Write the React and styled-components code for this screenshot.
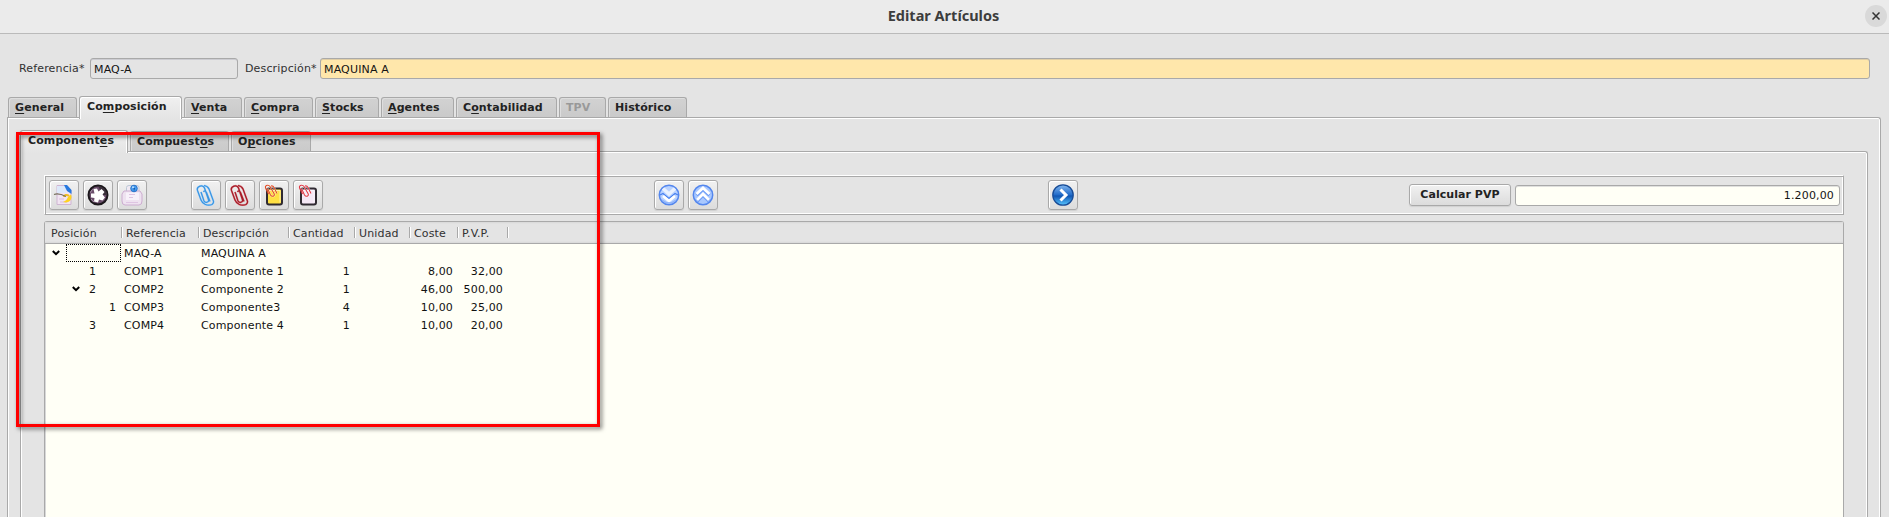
import React from 'react';
import styled, { createGlobalStyle, css } from 'styled-components';

const EDGE = '#a9a9a9';

const GlobalStyle = createGlobalStyle`
  * { box-sizing: border-box; }
  body { margin: 0; overflow: hidden; }
`;

const Window = styled.div`
  position: relative;
  display: flex;
  flex-direction: column;
  height: 517px;
  overflow: hidden;
  background: #e4e4e4;
  color: #141414;
  font: 11px/18px "DejaVu Sans", sans-serif;
  letter-spacing: 0.15px;
  white-space: pre;
`;

const TitleBar = styled.header`
  display: grid;
  grid-template-columns: 1fr auto 1fr;
  align-items: center;
  flex: none;
  height: 34px;
  padding: 0 2px 2px;
  background: #ebebeb;
  border-bottom: 1px solid #bababa;
`;

const Title = styled.h1`
  grid-column: 2;
  margin: 0;
  padding: 0 2px 2px 0;
  color: #3d3d3d;
  font: bold 14.5px/20px "Noto Sans", sans-serif;
  letter-spacing: 0;
`;

const CloseButton = styled.button`
  justify-self: end;
  display: grid;
  place-items: center;
  width: 22px;
  height: 22px;
  padding: 0;
  border: 0;
  border-radius: 50%;
  background: #d9d9d9;
`;

const FieldRow = styled.div`
  display: flex;
  align-items: center;
  flex: none;
  height: 21px;
  margin: 24px 19px 0 19px;
`;

const Label = styled.label`
  flex: none;
  width: ${(p) => p.$width}px;
  margin-left: ${(p) => p.$before || 0}px;
  color: #313131;
`;

const Field = styled.div`
  width: ${(p) => p.$width || 'auto'};
  flex: ${(p) => (p.$width ? 'none' : 1)};
  height: 21px;
  padding: ${(p) => (p.$right ? '1px 5px 0 3px' : '2px 3px 0')};
  border: 1px solid ${EDGE};
  border-radius: 3px;
  box-shadow: inset 0 1px 0 rgba(130, 130, 150, 0.25);
  background: ${(p) => p.$bg};
  text-align: ${(p) => (p.$right ? 'right' : 'left')};
`;

const TabStrip = styled.div`
  position: relative;
  z-index: 1;
  display: flex;
  align-items: flex-end;
  gap: 2px;
  flex: none;
  height: 23px;
  margin: ${(p) => p.$margin};
`;

const Tab = styled.div`
  width: ${(p) => p.$width}px;
  height: 20px;
  margin-bottom: 1px;
  padding: 1px 0 0 6px;
  border: 1px solid ${EDGE};
  border-bottom-width: 0;
  border-radius: 3px 3px 0 0;
  background: linear-gradient(#d2d2d2, #cacaca);
  box-shadow: inset 1px 1px 0 #dedede;
  color: ${(p) => (p.$disabled ? '#999' : '#222')};
  font-weight: bold;
  letter-spacing: 0.1px;
  line-height: 17px;
  u { text-underline-offset: 2px; }
  ${(p) => p.$active && css`
    height: 23px;
    margin-bottom: -1px;
    padding-left: 7px;
    background: linear-gradient(#f0f0f0, #e4e4e4);
    box-shadow: inset 1px 1px 0 #fff, inset -1px 0 0 #fff;
    line-height: 18px;
  `}
`;

const TabPanel = styled.div`
  display: flex;
  flex-direction: column;
  flex: 1;
  min-height: 0;
  margin: ${(p) => p.$margin};
  border: 1px solid ${EDGE};
  border-bottom: 0;
  border-radius: 0 3px 0 0;
  box-shadow: inset 1px 1px 0 #fff, inset -1px 0 0 #fff;
`;

const ToolBar = styled.div`
  display: flex;
  align-items: center;
  flex: none;
  height: 40px;
  margin: 23px 23px 0 23px;
  padding: 0 3px 0 4px;
  border: 1px solid;
  border-color: #fff ${EDGE} ${EDGE} #fff;
  box-shadow: inset 1px 1px 0 ${EDGE}, inset -1px -1px 0 #fff;
`;

const ButtonGroup = styled.div`
  display: flex;
  gap: 4px;
  margin-right: ${(p) => p.$after}px;
`;

const ToolButton = styled.button`
  display: grid;
  place-items: center;
  width: ${(p) => p.$width || 30}px;
  height: ${(p) => p.$height || 30}px;
  padding: 0;
  border: 1px solid ${EDGE};
  border-radius: 3px;
  background: linear-gradient(#f1f1f1, #dcdcdc);
  box-shadow: inset 1px 1px 0 #fff, 0 1px 1px #d0d0d0;
  color: #222;
  font: bold 11px/18px "DejaVu Sans", sans-serif;
  letter-spacing: 0.05px;
  svg { display: block; }
`;

const Tree = styled.div`
  flex: 1;
  min-height: 0;
  margin: 6px 23px 0 23px;
  border: 1px solid ${EDGE};
  border-bottom: 0;
  border-radius: 3px 3px 0 0;
  background: #fffff6;
  box-shadow: inset 1px 0 0 #d8d8d8;
`;

const columns = '77px 77px 90px 66px 55px 48px 50px';

const TreeHeader = styled.div`
  display: grid;
  grid-template-columns: ${columns};
  align-items: center;
  height: 22px;
  border-bottom: 1px solid ${EDGE};
  background: linear-gradient(#d8d8d8, #e4e4e4 2px, #e4e4e4 19px, #d8d8d8);
  color: #313131;
`;

const HeaderCell = styled.div`
  height: 11px;
  padding-left: ${(p) => (p.$first ? 6 : 4)}px;
  border-right: 1px solid ${EDGE};
  box-shadow: 1px 0 0 #fff;
  line-height: 13px;
`;

const Row = styled.div`
  display: grid;
  grid-template-columns: ${columns};
  height: 18px;
  color: #111;
  line-height: 20px;
`;

const Cell = styled.div`
  padding: ${(p) => (p.$number ? '0 5px 0 0' : '0 0 0 2px')};
  text-align: ${(p) => (p.$number ? 'right' : 'left')};
`;

const PriceCell = styled(Cell)`
  margin-left: -4px;
`;

const TreeCell = styled.div`
  display: flex;
  align-items: flex-start;
  height: 18px;
  padding-left: ${(p) => p.$depth * 20}px;
`;

const Expander = styled.span`
  display: grid;
  place-items: center;
  flex: none;
  width: 21px;
  height: 18px;
`;

const Position = styled.span`
  height: 18px;
  padding-left: 3px;
  ${(p) => p.$focused && css`
    flex: 1;
    margin-right: 1px;
    border: 1px dotted #000;
  `}
`;

const Highlight = styled.div`
  position: absolute;
  z-index: 2;
  left: 16px;
  top: 132px;
  width: 584px;
  height: 295px;
  border: 3px solid #f00;
  filter: drop-shadow(2px 2px 2px rgba(0, 0, 0, 0.55));
`;

const Icon = ({ children, size = 22 }) => (
  <svg width={size} height={size} viewBox="0 0 22 22" fill="none">{children}</svg>
);

const EditIcon = () => (
  <Icon>
    <path d="M4 1.5h10l4 5v14H4z" fill="#f1e4f2" stroke="#cfb5d2" />
    <path d="M4 2h9v7H4z" fill="#dce8fa" />
    <path d="M11 1h3l4.5 5v4L14 7z" fill="#2879df" />
    <path d="M7 18h7M6 15h5" stroke="#dabddd" />
    <path d="M18 10.5c2 5-2 9.5-8 7.5 3-1 4-3 5-5z" fill="#ffd321" />
    <path d="M11 13c0-2 3-3 5-1" stroke="#f3bf22" strokeWidth="2" />
    <path d="M1 10.5c4-1.5 8 0 12 2" stroke="#77705e" strokeWidth="1.2" />
  </Icon>
);

const WheelIcon = () => (
  <Icon>
    <circle cx="11" cy="11" r="9.5" fill="#6b4e6b" stroke="#1c181c" strokeWidth="2" />
    <path d="M11 2a9 9 0 0 1 9 9h-4z" fill="#3b303b" />
    <path d="m6.500 5 3.500-.5 1.500 3L14.500 5l3 3-2 2.500 2.500 3-2.500 3-3.500-1-1 3-4-1 .5-3.500-3.500-.5 0-4 3.500 0z" fill="#fff" />
    <path d="M3.5 8.5a8 8 0 0 1 2-3M4 15a8 8 0 0 0 3 3" stroke="#b29bb4" />
  </Icon>
);

const ScaleIcon = () => (
  <Icon>
    <path d="M5.5 7V3.5Q5.5 1.5 8 1.5h8q2 0 2 2V7" fill="#f1eaf3" stroke="#bcc8d6" />
    <path d="M3 7h16l2 3v7q0 4-3 4H4q-3 0-3-4v-7z" fill="#eee2f0" stroke="#ccacd0" />
    <path d="M5 8.5h13V16H5z" fill="#f8f1fa" />
    <path d="M5 18.5h12M8 10.5h6M8 13.5h4" stroke="#dec4e2" />
    <circle cx="13" cy="4.5" r="3.3" fill="#459cf0" stroke="#2b75ca" />
    <path d="m12.5 4 .5 3.5 1-3.5" fill="#124d9c" />
    <circle cx="12" cy="3.3" r="1" fill="#bde1ff" />
  </Icon>
);

const clipPath = 'M6 8 9 17Q10 19 12 18.3 14 17.6 13.5 15.8L9.5 4Q8.3 1 5 2.1 1.5 3.3 2.5 6.5L6 16Q7 18.7 10 20.3 13.5 22 17 20.5 19 19 18.4 17L14 5Q12.6 2 9 1.5M8.5 8Q10 5.7 11.5 8.5L15 17.5';

const ClipIcon = ({ color, light }) => (
  <Icon>
    <path d={clipPath} stroke={light} strokeWidth="2" strokeLinejoin="round" />
    <path d={clipPath} stroke={color} strokeWidth="1.2" strokeLinejoin="round" />
  </Icon>
);

const PasteIcon = ({ fill, clip }) => (
  <Icon>
    <rect x="4" y="4.5" width="15" height="16" rx="2" fill={fill} stroke="#302b32" strokeWidth="2" />
    <path d="M6 6.5h11v12" stroke="#fff" opacity=".5" />
    <path d="M2.5 4Q2 1.8 4 1.3 6 .8 7 2.5l4 7q1 2-.7 2.7-1.8.5-2.8-1.2L4.5 4.5M8 2q2-.5 3 1.5l3 6" stroke="#fff" strokeWidth="2" opacity=".6" />
    <path d="M2.5 4Q2 1.8 4 1.3 6 .8 7 2.5l4 7q1 2-.7 2.7-1.8.5-2.8-1.2L4.500 4.5M8 2q2-.5 3 1.5l3 6M2.5 4l3 6" stroke={clip} strokeWidth="1.1" />
  </Icon>
);

const DoubleArrowDownIcon = () => (
  <Icon>
    <circle cx="11" cy="11" r="9.7" fill="#b9d2ff" stroke="#5487ee" strokeWidth="1.5" />
    <path d="M5 4.5 11 10l6-5.5" stroke="#e9f1ff" strokeWidth="3.5" />
    <path d="m2 11 3-1.500 6 5 6-5 3 1.500" stroke="#4780f0" strokeWidth="1.200" />
    <path d="m5 12 6 5 6-5" stroke="#fff" strokeWidth="2.6" />
    <path d="M4 16q7 6 14 0" stroke="#8fb4fb" strokeWidth="1.500" />
  </Icon>
);

const DoubleArrowUpIcon = () => (
  <Icon>
    <circle cx="11" cy="11" r="9.7" fill="#a9c8fe" stroke="#5487ee" strokeWidth="1.5" />
    <path d="M4.500 11 11 5l6.5 6M5 17l6-6 6 6" stroke="#6a9af6" strokeWidth="3.500" />
    <path d="M4.5 10 11 4l6.5 6" stroke="#fff" strokeWidth="2.8" />
    <path d="m5 16 6-6 6 6" stroke="#fff" strokeWidth="2.8" />
  </Icon>
);

const ForwardIcon = () => (
  <Icon>
    <defs>
      <linearGradient id="forward" x2="0" y2="1">
        <stop stopColor="#83b7ef" />
        <stop offset=".48" stopColor="#236dca" />
        <stop offset=".55" stopColor="#1055b3" />
        <stop offset="1" stopColor="#57c6ff" />
      </linearGradient>
    </defs>
    <circle cx="11" cy="11" r="10.2" fill="url(#forward)" stroke="#174b96" strokeWidth="1.3" />
    <path d="m8.5 5.5 5.5 5.5-5.5 5.5" stroke="#fff" strokeWidth="3" />
  </Icon>
);

const mainTabs = [
  { width: 69, text: ['', 'G', 'eneral'] },
  { width: 103, text: ['Co', 'm', 'posición'], active: true },
  { width: 58, text: ['', 'V', 'enta'] },
  { width: 69, text: ['', 'C', 'ompra'] },
  { width: 64, text: ['', 'S', 'tocks'] },
  { width: 73, text: ['', 'A', 'gentes'] },
  { width: 101, text: ['C', 'o', 'ntabilidad'] },
  { width: 47, text: ['TPV', '', ''], disabled: true },
  { width: 79, text: ['Histórico', '', ''] },
];

const innerTabs = [
  { width: 108, text: ['Component', 'e', 's'], active: true },
  { width: 99, text: ['Compuest', 'o', 's'] },
  { width: 80, text: ['O', 'p', 'ciones'] },
];

const headers = ['Posición', 'Referencia', 'Descripción', 'Cantidad', 'Unidad', 'Coste', 'P.V.P.'];

const rows = [
  { depth: 0, open: true, focused: true, pos: '', ref: 'MAQ-A', name: 'MAQUINA A' },
  { depth: 1, pos: '1', ref: 'COMP1', name: 'Componente 1', qty: '1', cost: '8,00', price: '32,00' },
  { depth: 1, open: true, pos: '2', ref: 'COMP2', name: 'Componente 2', qty: '1', cost: '46,00', price: '500,00' },
  { depth: 2, pos: '1', ref: 'COMP3', name: 'Componente3', qty: '4', cost: '10,00', price: '25,00' },
  { depth: 1, pos: '3', ref: 'COMP4', name: 'Componente 4', qty: '1', cost: '10,00', price: '20,00' },
];

const Tabs = ({ items, margin }) => (
  <TabStrip $margin={margin}>
    {items.map(({ width, text, active, disabled }) => (
      <Tab key={text.join('')} $width={width} $active={active} $disabled={disabled}>
        {text[0]}{text[1] && <u>{text[1]}</u>}{text[2]}
      </Tab>
    ))}
  </TabStrip>
);

export default function App() {
  return (
    <Window>
      <GlobalStyle />
      <TitleBar>
        <Title>Editar Artículos</Title>
        <CloseButton aria-label="Cerrar">
          <svg width="8" height="8" viewBox="0 0 8 8"><path d="m.5.5 7 7m0-7-7 7" stroke="#333" strokeWidth="1.5" /></svg>
        </CloseButton>
      </TitleBar>
      <FieldRow>
        <Label $width={71}>Referencia*</Label>
        <Field $width="148px" $bg="#e4e4e4">MAQ-A</Field>
        <Label $width={75} $before={7}>Descripción*</Label>
        <Field $bg="#ffe7ab">MAQUINA A</Field>
      </FieldRow>
      <Tabs items={mainTabs} margin="16px 0 0 8px" />
      <TabPanel $margin="-1px 8px 0 7px">
        <Tabs items={innerTabs} margin="11px 0 0 12px" />
        <TabPanel $margin="-1px 12px 0 12px">
          <ToolBar>
            <ButtonGroup $after={44}>
              <ToolButton><EditIcon /></ToolButton>
              <ToolButton><WheelIcon /></ToolButton>
              <ToolButton><ScaleIcon /></ToolButton>
            </ButtonGroup>
            <ButtonGroup $after={331}>
              <ToolButton><ClipIcon color="#3b94df" light="#a8d6ff" /></ToolButton>
              <ToolButton><ClipIcon color="#a51c28" light="#df9298" /></ToolButton>
              <ToolButton><PasteIcon fill="#ffe044" clip="#e04b24" /></ToolButton>
              <ToolButton><PasteIcon fill="#f5e8f6" clip="#e03946" /></ToolButton>
            </ButtonGroup>
            <ButtonGroup $after={330}>
              <ToolButton><DoubleArrowDownIcon /></ToolButton>
              <ToolButton><DoubleArrowUpIcon /></ToolButton>
            </ButtonGroup>
            <ButtonGroup $after={331}>
              <ToolButton><ForwardIcon /></ToolButton>
            </ButtonGroup>
            <ButtonGroup $after={4}>
              <ToolButton $width={102} $height={22}>Calcular PVP</ToolButton>
            </ButtonGroup>
            <Field $bg="#fffff6" $right>1.200,00</Field>
          </ToolBar>
          <Tree>
            <TreeHeader>
              {headers.map((h, i) => <HeaderCell key={h} $first={i === 0}>{h}</HeaderCell>)}
            </TreeHeader>
            {rows.map((r) => (
              <Row key={r.ref}>
                <TreeCell $depth={r.depth}>
                  <Expander>
                    {r.open && (
                      <svg width="8" height="6" viewBox="0 0 8 6"><path d="m.8 1 3.2 3.2L7.2 1" fill="none" stroke="#000" strokeWidth="2" /></svg>
                    )}
                  </Expander>
                  <Position $focused={r.focused}>{r.pos}</Position>
                </TreeCell>
                <Cell>{r.ref}</Cell>
                <Cell>{r.name}</Cell>
                <Cell $number>{r.qty}</Cell>
                <Cell />
                <Cell $number>{r.cost}</Cell>
                <PriceCell $number>{r.price}</PriceCell>
              </Row>
            ))}
          </Tree>
        </TabPanel>
      </TabPanel>
      <Highlight />
    </Window>
  );
}
